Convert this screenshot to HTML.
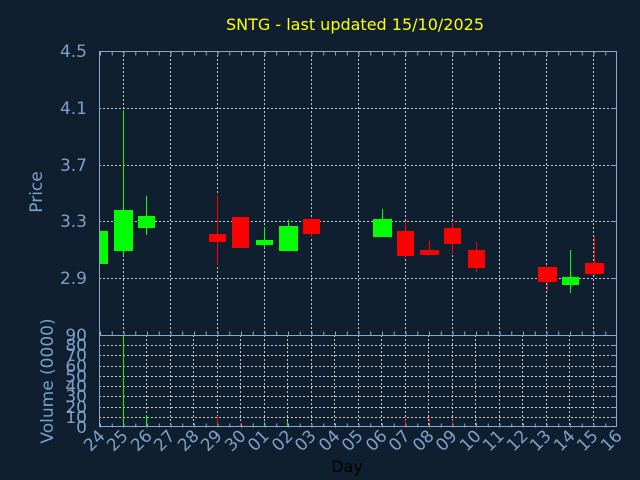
<!DOCTYPE html>
<html><head><style>
html,body{margin:0;padding:0;background:#101f30;}
svg{display:block;font-family:"DejaVu Sans","Liberation Sans",sans-serif;}
</style></head><body>
<svg width="640" height="480" viewBox="0 0 640 480" xmlns="http://www.w3.org/2000/svg">
<rect width="640" height="480" fill="#101f30"/>
<text x="355" y="30" fill="#ffff00" font-size="16" text-anchor="middle">SNTG - last updated 15/10/2025</text>
<g stroke="#c8c8c8" stroke-width="1" stroke-dasharray="2 2" fill="none">
<line x1="99" y1="108.5" x2="617" y2="108.5"/>
<line x1="99" y1="165.5" x2="617" y2="165.5"/>
<line x1="99" y1="221.5" x2="617" y2="221.5"/>
<line x1="99" y1="278.5" x2="617" y2="278.5"/>
<line x1="123.5" y1="51" x2="123.5" y2="335"/>
<line x1="170.5" y1="51" x2="170.5" y2="335"/>
<line x1="217.5" y1="51" x2="217.5" y2="335"/>
<line x1="264.5" y1="51" x2="264.5" y2="335"/>
<line x1="311.5" y1="51" x2="311.5" y2="335"/>
<line x1="358.5" y1="51" x2="358.5" y2="335"/>
<line x1="405.5" y1="51" x2="405.5" y2="335"/>
<line x1="452.5" y1="51" x2="452.5" y2="335"/>
<line x1="499.5" y1="51" x2="499.5" y2="335"/>
<line x1="546.5" y1="51" x2="546.5" y2="335"/>
<line x1="593.5" y1="51" x2="593.5" y2="335"/>
<line x1="99" y1="345.5" x2="617" y2="345.5"/>
<line x1="99" y1="355.5" x2="617" y2="355.5"/>
<line x1="99" y1="366.5" x2="617" y2="366.5"/>
<line x1="99" y1="376.5" x2="617" y2="376.5"/>
<line x1="99" y1="386.5" x2="617" y2="386.5"/>
<line x1="99" y1="396.5" x2="617" y2="396.5"/>
<line x1="99" y1="407.5" x2="617" y2="407.5"/>
<line x1="99" y1="417.5" x2="617" y2="417.5"/>
<path d="M123.5 335V427M146.5 335V427M170.5 335V427M193.5 335V427M217.5 335V427M240.5 335V427M264.5 335V427M287.5 335V427M311.5 335V427M334.5 335V427M358.5 335V427M381.5 335V427M405.5 335V427M428.5 335V427M452.5 335V427M475.5 335V427M499.5 335V427M522.5 335V427M546.5 335V427M569.5 335V427M593.5 335V427"/>
</g>
<!-- candles -->
<g fill="#00ff00" stroke="#00ff00">
<rect x="100" y="231" width="8" height="33" stroke="none"/>
<line x1="123.5" y1="110" x2="123.5" y2="256"/><rect x="114" y="210" width="19" height="41" stroke="none"/>
<line x1="146.5" y1="196" x2="146.5" y2="235"/><rect x="138" y="216" width="17" height="12" stroke="none"/>
<line x1="264.5" y1="227" x2="264.5" y2="248"/><rect x="256" y="240" width="17" height="5" stroke="none"/>
<line x1="288.5" y1="220" x2="288.5" y2="230"/><rect x="279" y="226" width="19" height="25" stroke="none"/>
<line x1="382.5" y1="209" x2="382.5" y2="220"/><rect x="373" y="219" width="19" height="18" stroke="none"/>
<line x1="570.5" y1="250" x2="570.5" y2="293"/><rect x="562" y="277" width="17" height="8" stroke="none"/>
<line x1="123.5" y1="335" x2="123.5" y2="427"/>
<line x1="146.5" y1="415" x2="146.5" y2="427"/>
<line x1="264.5" y1="422" x2="264.5" y2="427"/>
<line x1="287.5" y1="421" x2="287.5" y2="427"/>
<line x1="382.5" y1="424" x2="382.5" y2="427"/>
<line x1="570.5" y1="425" x2="570.5" y2="427"/>
</g>
<g fill="#ff0000" stroke="#ff0000">
<line x1="217.5" y1="195" x2="217.5" y2="265"/><rect x="209" y="234" width="17" height="8" stroke="none"/>
<rect x="232" y="217" width="17" height="31" stroke="none"/>
<line x1="311.5" y1="225" x2="311.5" y2="237"/><rect x="303" y="219" width="17" height="15" stroke="none"/>
<line x1="405.5" y1="221" x2="405.5" y2="258"/><rect x="397" y="231" width="17" height="25" stroke="none"/>
<line x1="429.5" y1="241" x2="429.5" y2="251"/><rect x="420" y="250" width="19" height="5" stroke="none"/>
<line x1="452.5" y1="221" x2="452.5" y2="254"/><rect x="444" y="228" width="17" height="16" stroke="none"/>
<line x1="476.5" y1="242" x2="476.5" y2="272"/><rect x="468" y="250" width="17" height="18" stroke="none"/>
<line x1="547.5" y1="270" x2="547.5" y2="291"/><rect x="538" y="267" width="19" height="15" stroke="none"/>
<line x1="594.5" y1="236" x2="594.5" y2="276"/><rect x="585" y="263" width="19" height="11" stroke="none"/>
<line x1="217.5" y1="416" x2="217.5" y2="427"/>
<line x1="240.5" y1="423" x2="240.5" y2="427"/>
<line x1="311.5" y1="424" x2="311.5" y2="427"/>
<line x1="405.5" y1="420" x2="405.5" y2="427"/>
<line x1="429.5" y1="418" x2="429.5" y2="427"/>
<line x1="452.5" y1="420" x2="452.5" y2="427"/>
<line x1="476.5" y1="422" x2="476.5" y2="427"/>
<line x1="546.5" y1="425" x2="546.5" y2="427"/>
<line x1="593.5" y1="424" x2="593.5" y2="427"/>
</g>
<!-- frame -->
<g stroke="#8aa8cc" fill="none" stroke-width="1">
<rect x="99.5" y="51.5" width="517" height="375"/>
<line x1="99" y1="335.5" x2="617" y2="335.5"/>
<line x1="100" y1="53.5" x2="617" y2="53.5" stroke-width="4" stroke-dasharray="1 10.75"/>
<line x1="100" y1="333.5" x2="617" y2="333.5" stroke-width="4" stroke-dasharray="1 10.75"/>
<line x1="100" y1="425.5" x2="617" y2="425.5" stroke-width="4" stroke-dasharray="1 10.75"/>
<path d="M611 108.5H617M611 165.5H617M611 221.5H617M611 278.5H617M611 345.5H617M611 355.5H617M611 366.5H617M611 376.5H617M611 386.5H617M611 396.5H617M611 407.5H617M611 417.5H617"/>
</g>
<g fill="#7f9fc8" font-size="17" text-anchor="end">
<text x="87" y="57">4.5</text>
<text x="87" y="114">4.1</text>
<text x="87" y="171">3.7</text>
<text x="87" y="227">3.3</text>
<text x="87" y="284">2.9</text>
<text x="87" y="341">90</text>
<text x="87" y="351">80</text>
<text x="87" y="361">70</text>
<text x="87" y="372">60</text>
<text x="87" y="382">50</text>
<text x="87" y="392">40</text>
<text x="87" y="402">30</text>
<text x="87" y="413">20</text>
<text x="87" y="423">10</text>
<text x="87" y="433">0</text>
</g>
<g fill="#7f9fc8" font-size="17" text-anchor="middle">
<text transform="translate(42,192) rotate(-90)">Price</text>
<text transform="translate(53,381) rotate(-90)">Volume (0000)</text>
</g>
<g fill="#7f9fc8" font-size="17" text-anchor="end">
<text transform="translate(106,437) rotate(-45)">24</text>
<text transform="translate(129,437) rotate(-45)">25</text>
<text transform="translate(153,437) rotate(-45)">26</text>
<text transform="translate(176,437) rotate(-45)">27</text>
<text transform="translate(200,437) rotate(-45)">28</text>
<text transform="translate(223,437) rotate(-45)">29</text>
<text transform="translate(247,437) rotate(-45)">30</text>
<text transform="translate(270,437) rotate(-45)">01</text>
<text transform="translate(294,437) rotate(-45)">02</text>
<text transform="translate(317,437) rotate(-45)">03</text>
<text transform="translate(341,437) rotate(-45)">04</text>
<text transform="translate(364,437) rotate(-45)">05</text>
<text transform="translate(388,437) rotate(-45)">06</text>
<text transform="translate(411,437) rotate(-45)">07</text>
<text transform="translate(435,437) rotate(-45)">08</text>
<text transform="translate(458,437) rotate(-45)">09</text>
<text transform="translate(482,437) rotate(-45)">10</text>
<text transform="translate(505,437) rotate(-45)">11</text>
<text transform="translate(529,437) rotate(-45)">12</text>
<text transform="translate(552,437) rotate(-45)">13</text>
<text transform="translate(576,437) rotate(-45)">14</text>
<text transform="translate(599,437) rotate(-45)">15</text>
<text transform="translate(623,437) rotate(-45)">16</text>
</g>
<text x="347" y="472" fill="#000000" font-size="16" text-anchor="middle">Day</text>
</svg>
</body></html>
